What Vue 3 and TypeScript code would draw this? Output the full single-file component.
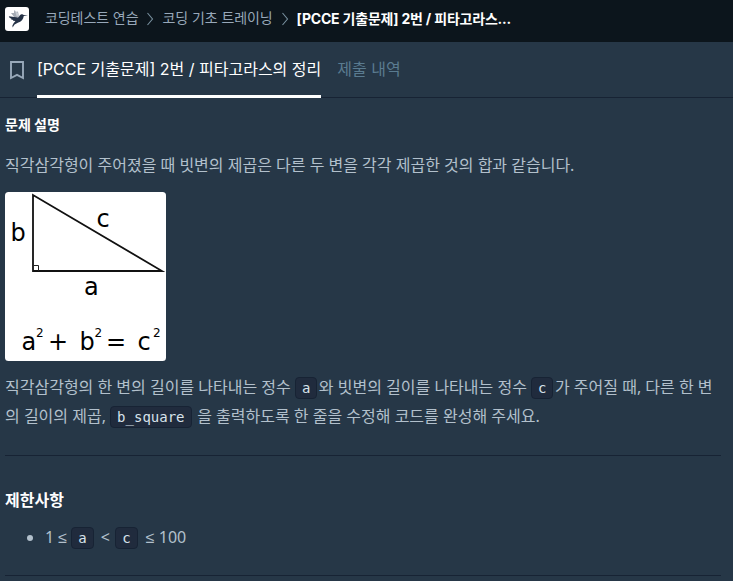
<script setup lang="ts">
const crumbs: string[] = ['코딩테스트 연습', '코딩 기초 트레이닝']
</script>

<template>
  <div class="page">
    <header class="topbar">
      <svg class="logo" viewBox="0 0 24 24">
        <rect width="24" height="24" rx="3" fill="#fff" />
        <path d="M6 6 L9 6 L9.2 3 L11 5 L13 4.5 L14 10 L10 11Z" fill="#a5abb4" />
        <path d="M10 3.5 L13 6 L14 10 L11.5 9Z" fill="#c7ccd2" />
        <path d="M3.8 9.2 L13 10.5 C14.5 9.5 14.8 7.3 16.5 7.2 C17.5 7.1 18.1 7.7 18.7 8.1 L23 8.4 L18.8 9.1 C18.3 12.2 16.5 15 12.8 15.8 L9.6 17.5 L7.6 20.6 L7.4 18.5 L8.6 16.2 L10.4 14 L8 13.8 L8.2 13 L6.2 12.5 L6.4 11.7 L4.5 10.8 Z" fill="#263347" />
      </svg>
      <nav class="crumbs">
        <template v-for="c in crumbs" :key="c">
          <span class="crumb">{{ c }}</span>
          <svg class="chev" viewBox="0 0 8 14"><path d="M1.5 1 L6.5 7 L1.5 13" /></svg>
        </template>
        <strong class="current">[PCCE 기출문제] 2번 / 피타고라스...</strong>
      </nav>
    </header>

    <div class="tabs">
      <svg class="bookmark" viewBox="0 0 17 20"><path d="M3 2 H15 V18 L9 14.9 L3 18 Z" /></svg>
      <div class="tab active"><span>[PCCE 기출문제] 2번 / 피타고라스의 정리</span></div>
      <div class="tab"><span>제출 내역</span></div>
    </div>

    <main class="content">
      <h6>문제 설명</h6>
      <p class="intro">직각삼각형이 주어졌을 때 빗변의 제곱은 다른 두 변을 각각 제곱한 것의 합과 같습니다.</p>
      <svg class="figure" viewBox="0 0 161 169">
        <rect width="161" height="169" rx="3.5" fill="#fff" />
        <path d="M28 3 V79 H157 Z" fill="none" stroke="#111" stroke-width="1.8" />
        <path d="M28.5 73.5 H33.5 V79" fill="none" stroke="#222" stroke-width="1" />
        <g class="math">
          <text x="5.5" y="49">b</text>
          <text x="91.5" y="35">c</text>
          <text x="79" y="103">a</text>
          <text x="16.5" y="158">a</text>
          <text x="43" y="158">+</text>
          <text x="74.5" y="158">b</text>
          <text x="101" y="158">=</text>
          <text x="132.5" y="158">c</text>
        </g>
        <g class="sup">
          <text x="31" y="145">2</text>
          <text x="89.5" y="145">2</text>
          <text x="148" y="145">2</text>
        </g>
      </svg>
      <p class="body">직각삼각형의 한 변의 길이를 나타내는 정수 <code>a</code>와 빗변의 길이를 나타내는 정수 <code>c</code>가 주어질 때, 다른 한 변의 길이의 제곱, <code>b_square</code> 을 출력하도록 한 줄을 수정해 코드를 완성해 주세요.</p>
      <hr />
      <h5>제한사항</h5>
      <ul>
        <li>1 ≤ <code class="lower">a</code> &lt; <code class="upper">c</code> ≤ 100</li>
      </ul>
      <hr class="last" />
    </main>
  </div>
</template>

<style>
body {
  background: #263747;
  overflow: hidden;
}
</style>

<style scoped>
* {
  box-sizing: border-box;
}
.page {
  width: 733px;
  height: 581px;
  overflow: hidden;
  background: #263747;
  color: #b2c0cc;
  font-family: Inter, "Noto Sans CJK KR", sans-serif;
}
.topbar {
  height: 42px;
  padding: 0 5px 5px;
  display: flex;
  align-items: center;
  background: #0c151c;
}
.logo {
  width: 24px;
  height: 24px;
  flex: none;
}
.crumbs {
  display: flex;
  align-items: center;
  margin-left: 16px;
  font-size: 14px;
  line-height: 24px;
  white-space: nowrap;
  color: #98a8b9;
}
.crumb {
  padding-bottom: 1px;
  letter-spacing: -0.08px;
}
.chev {
  width: 8px;
  height: 14px;
  margin: 0 8px;
  fill: none;
  stroke: #78909f;
  stroke-width: 1.1;
}
.current {
  color: #fff;
  font-weight: 700;
  letter-spacing: -0.2px;
}
.tabs {
  height: 56px;
  padding: 0 8px;
  display: flex;
  align-items: stretch;
  border-bottom: 1px solid #172334;
}
.bookmark {
  width: 17px;
  height: 20px;
  margin: 18px 12px 0 0;
  fill: none;
  stroke: #98a8b9;
  stroke-width: 1.9;
}
.tab {
  height: 56px;
  margin-right: 16px;
  font-size: 16px;
  line-height: 54px;
  white-space: nowrap;
  color: #5a7b90;
}
.tab.active {
  color: #fff;
  border-bottom: 3px solid #fff;
}
.content {
  padding: 15px 12px 0 5px;
  font-size: 16px;
}
h6 {
  margin: 0;
  font-size: 14px;
  line-height: 24px;
  color: #fff;
}
p {
  margin: 0;
  font-family: "Noto Sans", "Noto Sans CJK KR", sans-serif;
}
.intro {
  margin-top: 15px;
  line-height: 26px;
  white-space: nowrap;
}
.figure {
  display: block;
  width: 161px;
  height: 169px;
  margin-top: 14px;
}
.math {
  font: 24px "DejaVu Sans", sans-serif;
}
.sup {
  font: 12px "DejaVu Sans", sans-serif;
}
.body {
  height: 59px;
  margin-top: 12px;
  line-height: 29px;
  word-break: break-all;
}
code {
  display: inline-block;
  height: 22px;
  margin: 0 1.5px 0 0;
  padding: 0 6px;
  border: 1px solid #172334;
  border-radius: 4px;
  background: #202b3d;
  color: #d7e2eb;
  font: 14px/21px "DejaVu Sans Mono", monospace;
}
hr {
  margin: 23px 0 0;
  border: 0;
  border-top: 1px solid #172334;
}
h5 {
  margin: 31px 0 0;
  font-size: 16px;
  line-height: 26px;
  color: #fff;
}
ul {
  margin: 9px 0 0;
  padding: 0 0 0 40px;
  font-family: "Noto Sans", sans-serif;
  line-height: 30px;
}
.lower {
  margin: 0 3px 0 0;
}
.upper {
  margin: 0 4px 0 1px;
}
.last {
  margin-top: 23px;
}
</style>
